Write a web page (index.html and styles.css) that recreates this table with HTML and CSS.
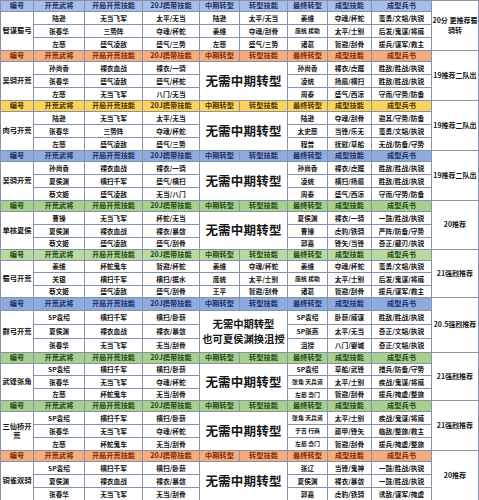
FILE: index.html
```html
<!DOCTYPE html>
<html lang="zh">
<head>
<meta charset="utf-8">
<link rel="stylesheet" href="styles.css">
</head>
<body>
<div class="sheet">

<div class="grp rows50 hb1">
  <div class="h">编号</div><div class="h">开荒武将</div><div class="h">开局开荒技能</div><div class="h">20J携带技能</div><div class="h">中期转型</div><div class="h">转型技能</div><div class="h">最终转型</div><div class="h">成型技能</div><div class="h">成型兵书</div>
  <div class="note">20分 更推荐蜀<br>骑转</div>
  <div class="name">智谋蜀弓</div>
  <div>陆逊</div><div>无当飞军</div><div>太平/无当</div><div>陆逊</div><div>太平/无当</div><div>姜维</div><div>夺魂/杯蛇</div><div>蛮勇/文韬/执锐</div>
  <div>张春华</div><div>三势阵</div><div>夺魂/杯蛇</div><div>姜维</div><div>夺魂/刮骨</div><div class="sm">庞统 援助</div><div>太平/士别</div><div>后发/鬼谋/将威</div>
  <div>左慈</div><div>盛气凌敌</div><div>盛气/三势</div><div>左慈</div><div>盛气/三势</div><div>诸葛</div><div>暂避/刮骨</div><div>援兵/谋军/救主</div>
</div>

<div class="grp rows50 ho">
  <div class="h">编号</div><div class="h">开荒武将</div><div class="h">开局开荒技能</div><div class="h">20J携带技能</div><div class="h">中期转型</div><div class="h">转型技能</div><div class="h">最终转型</div><div class="h">成型技能</div><div class="h">成型兵书</div>
  <div class="note">19推荐二队出</div>
  <div class="name">吴骑开荒</div>
  <div>孙尚香</div><div>裸衣血战</div><div>裸衣/一骑</div><div class="big">无需中期转型</div><div>孙尚香</div><div>裸衣/虎踞</div><div>胜敌/胜战/执锐</div>
  <div>张春华</div><div>盛气凌敌</div><div>盛气/杯蛇</div><div>凌统</div><div>扬眉/横扫</div><div>胜敌/胜战/执锐</div>
  <div>左慈</div><div>无当飞军</div><div>八门/无当</div><div>周泰</div><div>盛气/西凉</div><div>守而/守势/防备</div>
</div>

<div class="grp rows50 hy">
  <div class="h">编号</div><div class="h">开荒武将</div><div class="h">开局开荒技能</div><div class="h">20J携带技能</div><div class="h">中期转型</div><div class="h">转型技能</div><div class="h">最终转型</div><div class="h">成型技能</div><div class="h">成型兵书</div>
  <div class="note">19推荐二队出</div>
  <div class="name">肉弓开荒</div>
  <div>陆逊</div><div>无当飞军</div><div>太平/无当</div><div class="big">无需中期转型</div><div>陆逊</div><div>夺魂/刮骨</div><div>避其/守势/防备</div>
  <div>张春华</div><div>三势阵</div><div>夺魂/杯蛇</div><div>太史慈</div><div>当锋/乐无</div><div>蛮勇/文韬/执锐</div>
  <div>左慈</div><div>盛气凌敌</div><div>盛气/三势</div><div>程普</div><div>抚慰/草船</div><div>无战/防备/守势</div>
</div>

<div class="grp rows50 hb2">
  <div class="h">编号</div><div class="h">开荒武将</div><div class="h">开局开荒技能</div><div class="h">20J携带技能</div><div class="h">中期转型</div><div class="h">转型技能</div><div class="h">最终转型</div><div class="h">成型技能</div><div class="h">成型兵书</div>
  <div class="note">19推荐二队出</div>
  <div class="name">吴骑开荒</div>
  <div>孙尚香</div><div>裸衣血战</div><div>裸衣/一骑</div><div class="big">无需中期转型</div><div>孙尚香</div><div>裸衣/虎踞</div><div>胜敌/胜战/执锐</div>
  <div>夏侯渊</div><div>横扫千军</div><div>盛气/横扫</div><div>凌统</div><div>横扫/扬眉</div><div>胜敌/胜战/执锐</div>
  <div>蔡文姬</div><div>盛气凌敌</div><div>无当/八门</div><div>周泰</div><div>盛气/西凉</div><div>守而/守势/防备</div>
</div>

<div class="grp rows49 hg">
  <div class="h">编号</div><div class="h">开荒武将</div><div class="h">开局开荒技能</div><div class="h">20J携带技能</div><div class="h">中期转型</div><div class="h">转型技能</div><div class="h">最终转型</div><div class="h">成型技能</div><div class="h">成型兵书</div>
  <div class="note">20推荐</div>
  <div class="name">单核夏侯</div>
  <div>曹操</div><div>无当飞军</div><div>杯蛇/无当</div><div class="big">无需中期转型</div><div>夏侯渊</div><div>裸衣/一骑</div><div>一鼓/胜战/执锐</div>
  <div>夏侯渊</div><div>裸衣血战</div><div>裸衣/暴敛</div><div>曹操</div><div>虎豹/铁骑</div><div>严阵/防备/守势</div>
  <div>蔡文姬</div><div>盛气凌敌</div><div>盛气/刮骨</div><div>郭嘉</div><div>锋矢/当锋</div><div>奇正/藏刃/执锐</div>
</div>

<div class="grp rows48 hg2">
  <div class="h">编号</div><div class="h">开荒武将</div><div class="h">开局开荒技能</div><div class="h">20J携带技能</div><div class="h">中期转型</div><div class="h">转型技能</div><div class="h">最终转型</div><div class="h">成型技能</div><div class="h">成型兵书</div>
  <div class="note">21强烈推荐</div>
  <div class="name">蜀弓开荒</div>
  <div>姜维</div><div>杯蛇鬼车</div><div>暂避/杯蛇</div><div>姜维</div><div>夺魂/杯蛇</div><div>姜维</div><div>夺魂/杯蛇</div><div>蛮勇/文韬/执锐</div>
  <div>关银</div><div>横扫千军</div><div>横扫/据水</div><div>庞统</div><div>太平/士别</div><div class="sm">庞统 援助</div><div>太平/士别</div><div>后发/鬼谋/将威</div>
  <div>蔡文姬</div><div>盛气凌敌</div><div>盛气/刮骨</div><div>王平</div><div>暂避/刮骨</div><div>诸葛</div><div>暂避/刮骨</div><div>援兵/谋军/救主</div>
</div>

<div class="grp rows55 hb2">
  <div class="h">编号</div><div class="h">开荒武将</div><div class="h">开局开荒技能</div><div class="h">20J携带技能</div><div class="h">中期转型</div><div class="h">转型技能</div><div class="h">最终转型</div><div class="h">成型技能</div><div class="h">成型兵书</div>
  <div class="note">20.5强烈推荐</div>
  <div class="name">群弓开荒</div>
  <div>SP袁绍</div><div>横扫千军</div><div>横扫/卧薪</div><div class="big two"><span>无需中期转型</span><span>也可夏侯渊换沮授</span></div><div>SP袁绍</div><div>卧薪/威谋</div><div>胜敌/胜战/执锐</div>
  <div>夏侯渊</div><div>裸衣血战</div><div>裸衣/暴敛</div><div>SP张燕</div><div>太平/无当</div><div>奇正/文韬/执锐</div>
  <div>张春华</div><div>无当飞军</div><div>无当/刮骨</div><div>沮授</div><div>八门/婴城</div><div>奇正/文韬/执锐</div>
</div>

<div class="grp rows48 hg">
  <div class="h">编号</div><div class="h">开荒武将</div><div class="h">开局开荒技能</div><div class="h">20J携带技能</div><div class="h">中期转型</div><div class="h">转型技能</div><div class="h">最终转型</div><div class="h">成型技能</div><div class="h">成型兵书</div>
  <div class="note">21强烈推荐</div>
  <div class="name">武锋张角</div>
  <div>SP袁绍</div><div>横扫千军</div><div>横扫/卧薪</div><div class="big">无需中期转型</div><div>SP袁绍</div><div>草船/武锋</div><div>措兵/防备/守势</div>
  <div>张春华</div><div>无当飞军</div><div>夺魂/杯蛇</div><div class="sm">张角 天兵道</div><div>太平/士别</div><div>疾战/鬼谋/将威</div>
  <div>左慈</div><div>杯蛇鬼车</div><div>无当/刮骨</div><div class="sm">左慈 奇门</div><div>暂避/刮骨</div><div>援兵/掩虚/整旅</div>
</div>

<div class="grp rows50 hg">
  <div class="h">编号</div><div class="h">开荒武将</div><div class="h">开局开荒技能</div><div class="h">20J携带技能</div><div class="h">中期转型</div><div class="h">转型技能</div><div class="h">最终转型</div><div class="h">成型技能</div><div class="h">成型兵书</div>
  <div class="note">21强烈推荐</div>
  <div class="name">三仙桥开<br>荒</div>
  <div>SP袁绍</div><div>横扫千军</div><div>横扫/卧薪</div><div class="big">无需中期转型</div><div class="sm">张角 天兵道</div><div>太平/士别</div><div>疾战/鬼谋/将威</div>
  <div>张春华</div><div>无当飞军</div><div>夺魂/杯蛇</div><div class="sm">于吉 行商</div><div>藤甲/锋矢</div><div>临敌/整旅/救主</div>
  <div>左慈</div><div>杯蛇鬼车</div><div>无当/刮骨</div><div class="sm">左慈 奇门</div><div>暂避/刮骨</div><div>援兵/掩虚/整旅</div>
</div>

<div class="grp rows50 ho">
  <div class="h">编号</div><div class="h">开荒武将</div><div class="h">开局开荒技能</div><div class="h">20J携带技能</div><div class="h">中期转型</div><div class="h">转型技能</div><div class="h">最终转型</div><div class="h">成型技能</div><div class="h">成型兵书</div>
  <div class="note">20推荐</div>
  <div class="name">铜雀双骑</div>
  <div>SP袁绍</div><div>横扫千军</div><div>横扫/卧薪</div><div class="big">无需中期转型</div><div>张辽</div><div>当锋/鬼神</div><div>一鼓/胜战/执锐</div>
  <div>夏侯渊</div><div>裸衣血战</div><div>裸衣/暴敛</div><div>夏侯渊</div><div>裸衣/暴敛</div><div>一鼓/胜战/执锐</div>
  <div>张春华</div><div>无当飞军</div><div>无当/刮骨</div><div>郭嘉</div><div>虎豹/铁骑</div><div>诱敌/谋军/掩虚</div>
</div>

</div>
</body>
</html>
```

FILE: styles.css
```css
html, body {
  margin: 0;
  padding: 0;
  background: #ffffff;
}

body {
  font-family: "Noto Sans CJK SC", "Noto Sans", sans-serif;
  color: #161616;
  overflow: hidden;
}

.sheet {
  width: 479px;
  box-sizing: border-box;
  padding: 1px;
  display: grid;
  gap: 1px;
  background: #8592a8;
}

.grp {
  display: grid;
  grid-template-columns: 32px 50px 57px 56px 39px 47px 39px 43px 59px 46px;
  gap: 1px;
}

.rows50 { grid-template-rows: 10px 12px 12px 12px; }
.rows49 { grid-template-rows: 10px 12px 12px 11px; }
.rows48 { grid-template-rows: 10px 11px 12px 11px; }
.rows55 { grid-template-rows: 12px 13px 13px 13px; }

.grp > div {
  background: #ffffff;
  display: flex;
  align-items: center;
  justify-content: center;
  text-align: center;
  font-size: 6.7px;
  font-weight: 600;
  line-height: 1;
  white-space: nowrap;
  overflow: hidden;
}

.grp > .h {
  font-size: 7.2px;
  font-weight: 700;
}

.grp > .note {
  grid-column: 10;
  grid-row: 1 / span 4;
  font-size: 7px;
  line-height: 1.35;
  white-space: normal;
}

.grp > .name {
  grid-column: 1;
  grid-row: 2 / span 3;
  font-size: 7.3px;
  line-height: 1.3;
  white-space: normal;
}

.grp > .big {
  grid-column: span 2;
  grid-row: span 3;
  font-size: 12.5px;
  font-weight: 700;
  letter-spacing: 0.2px;
}

.grp > .big.two {
  flex-direction: column;
  font-size: 10.3px;
  line-height: 1.45;
  letter-spacing: 0;
}

.grp > .big.two > span {
  display: block;
  line-height: 1.45;
}

.grp > .sm {
  font-size: 5.9px;
}

.hb1 > .h { background: #a9bdea; color: #1f2f5a; }
.hb2 > .h { background: #8eaadf; color: #1d2e60; }
.ho > .h { background: #f4ad7c; color: #7d2a08; }
.hy > .h { background: #fcd35c; color: #4a3400; }
.hg > .h { background: #a9d08e; color: #1f4a12; }
.hg2 > .h { background: #b9d9a1; color: #1f4a12; }
```
